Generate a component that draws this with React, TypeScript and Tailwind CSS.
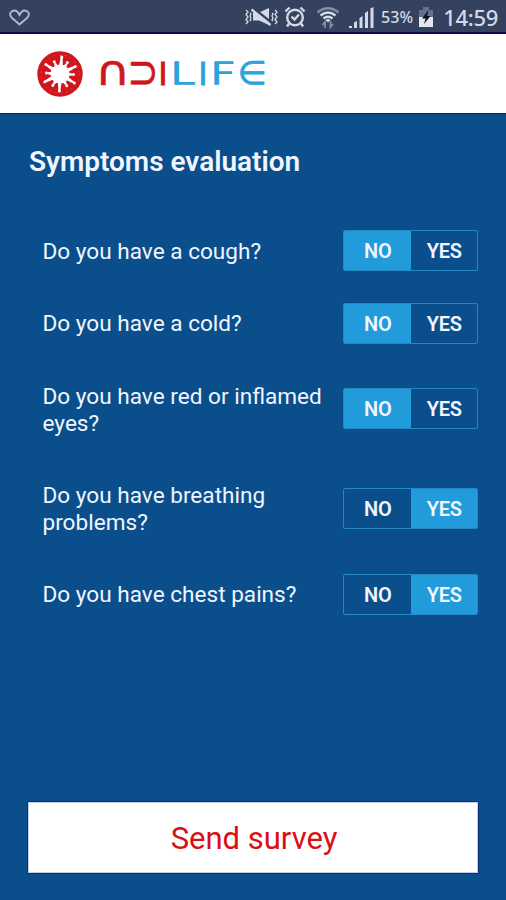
import { useState } from "react";
import { clsx } from "clsx";

const questions = [
  { text: "Do you have a cough?", answer: "NO" },
  { text: "Do you have a cold?", answer: "NO" },
  { text: "Do you have red or inflamed eyes?", answer: "NO" },
  { text: "Do you have breathing problems?", answer: "YES" },
  { text: "Do you have chest pains?", answer: "YES" },
];

function StatusBar() {
  return (
    <div className="flex h-[34px] shrink-0 items-center border-b-2 border-[#0b0c46] bg-[#344260] pt-0.5 pr-2 pl-[9px] text-[#d3dae6]">
      <svg width="22" height="17" viewBox="0 0 22 17" fill="none" stroke="#aebccd" strokeWidth="1.8">
        <path d="M10.500 15.500 2.500 8.500C-.5 5 2 1.500 5.500 1.500 8 1.500 9.500 4 10.500 6 11.500 4 13 1.500 15.500 1.500 19 1.500 21.500 5 18.500 8.500Z" />
      </svg>

      <svg className="ml-[213px]" width="34" height="20" viewBox="0 0 34 20" fill="none" stroke="currentColor">
        <path d="M2 3l2 2-2 2.500 2 2.500-2 2.500 2 2.500-2 2M6 6l1 1-1 2 1 2-1 2 1 1M31 3l2 2-2 2.500 2 2.500-2 2.500 2 2.500-2 2M28 6l1 1-1 2 1 2-1 2 1 1" strokeWidth="1.300" />
        <path d="M9 5.500h6L25 1v17l-10-4.500H9z" fill="currentColor" stroke="none" />
        <path d="M9 1l19 15" stroke="#344260" strokeWidth="2.500" />
        <path d="M7.500 2.500l19 15.500" strokeWidth="2.400" />
      </svg>

      <svg className="ml-[6px]" width="22" height="22" viewBox="0 0 22 22" fill="none" stroke="currentColor" strokeWidth="2.400">
        <circle cx="11" cy="11.500" r="7.800" />
        <path d="M7.500 10.500l3 3 4.500-5M1.500 5.500 5.500 1.500M16.500 1.500l4 4M5 17.500l-2 3M17 17.500l2 3" />
      </svg>

      <svg className="ml-[10px]" width="24" height="23" viewBox="0 0 24 23" fill="none" stroke="currentColor" strokeWidth="2.400">
        <path d="M1.500 6.500Q12-2 22.500 6.500" stroke="#8390a7" />
        <path d="M4.500 9.500q7.500-6 15 0M7.500 12.500q4.500-3.500 9 0" />
        <path d="M9.500 14q2.500-2 5 0L12 16.500z" fill="currentColor" stroke="none" />
        <path d="M9 22v-6l-2.500 3M14.500 15v6l2.500-3" stroke="#8390a7" strokeWidth="1.800" />
      </svg>

      <svg className="ml-[9px]" width="25" height="21" viewBox="0 0 25 21" fill="currentColor">
        <path d="M0 19h3v2H0zM5 15.500l3-1.500v7H5zM10.500 11l3-2v12h-3zM16 6l3-2v17h-3zM21.500 1.500l3-1.500v21h-3z" />
      </svg>

      <span className="ml-[7px] w-[34px] font-['Noto_Sans',sans-serif] text-[16px] font-medium tracking-[0.1px]">
        53%
      </span>
      <svg className="ml-[4px]" width="14" height="20" viewBox="0 0 14 20">
        <path d="M4 0h6v3h4v17H0V3h4z" fill="#65718a" />
        <path d="M0 10h14v10H0z" fill="#e3e7ed" />
        <path d="M9.500 3 3 11.500h3.500L5 17l6.500-8H8z" fill="#0c1019" />
      </svg>
      <span className="ml-auto pt-px font-['Noto_Sans',sans-serif] text-[22px] font-medium tracking-[-0.3px]">
        14:59
      </span>
    </div>
  );
}

function Emblem() {
  const rays = [6, 33, 64, 92, 122, 150, 182, 212, 243, 274, 304, 335];
  return (
    <svg width="46" height="46" viewBox="0 0 46 46">
      <circle cx="23" cy="23" r="22.700" fill="#cf161d" />
      <circle cx="23" cy="23" r="19" fill="none" stroke="#de4b4f" strokeDasharray="1.500 4" />
      <circle cx="23" cy="23" r="9.500" fill="#fff" />
      {rays.map((angle, i) => (
        <g key={angle} transform={`rotate(${angle} 23 23)`} fill="#fff">
          <path d={i % 2 ? "M21 16l1-5h2l1 5z" : "M21 16l1-9.500h2l1 9.500z"} />
          <circle cx="23" cy={i % 2 ? 9.5 : 6} r="1.500" />
        </g>
      ))}
    </svg>
  );
}

const wordmark = [
  { glyph: "∩", box: "w-[24px] text-[#cf161d]", shape: "text-[37px] -translate-y-[3px] scale-x-[1.3] scale-y-[1.12] [-webkit-text-stroke:0.5px]" },
  { glyph: "⊃", box: "w-[24px] text-[#cf161d]", shape: "text-[37px] -translate-y-[1.5px] scale-y-[1.28] [-webkit-text-stroke:0.6px]" },
  { glyph: "I", box: "w-[4px] text-[#cf161d]", shape: "text-[32px] -translate-y-[0.5px] [-webkit-text-stroke:0.8px]" },
  { glyph: "L", box: "w-[24px] text-[#2ba3db]", shape: "text-[31px] -translate-y-[0.5px] font-extralight scale-x-[1.45] [-webkit-text-stroke:1.7px]" },
  { glyph: "I", box: "w-[4px] text-[#2ba3db]", shape: "text-[32px] -translate-y-[0.5px] [-webkit-text-stroke:0.8px]" },
  { glyph: "F", box: "w-[24px] text-[#2ba3db]", shape: "text-[31px] -translate-y-[0.5px] font-extralight scale-x-[1.45] [-webkit-text-stroke:1.7px]" },
  { glyph: "∈", box: "w-[24px] text-[#2ba3db]", shape: "text-[37px] -translate-x-px scale-x-[0.9] scale-y-[0.87] [-webkit-text-stroke:0.9px]" },
];

function Header() {
  return (
    <header className="flex h-[79px] shrink-0 items-center bg-white pl-[37px]">
      <Emblem />
      <div aria-label="NDILIFE" className="ml-[18px] flex gap-[6px] font-['DejaVu_Sans',sans-serif] leading-none">
        {wordmark.map((letter, i) => (
          <span key={i} className={clsx("flex h-6 items-center justify-center", letter.box)}>
            <span className={clsx("shrink-0", letter.shape)}>{letter.glyph}</span>
          </span>
        ))}
      </div>
    </header>
  );
}

function Toggle({ initial }: { initial: string }) {
  const [value, setValue] = useState(initial);

  return (
    <div className="flex h-[41px] w-[135px] shrink-0 overflow-hidden rounded-[2px] border border-[#2389c4] text-[20px] font-semibold">
      {["NO", "YES"].map((option) => (
        <button
          key={option}
          onClick={() => setValue(option)}
          className={clsx("flex-1 pt-px pl-px tracking-[-0.3px]", value === option && "bg-[#229bdb]")}
        >
          {option}
        </button>
      ))}
    </div>
  );
}

export default function App() {
  return (
    <div className="flex h-[900px] w-[506px] flex-col overflow-hidden bg-[#0a4f8c] font-[Roboto,sans-serif] text-[#f0f5ff]">
      <StatusBar />
      <Header />

      <main className="flex flex-1 flex-col border-t border-[#08216c] px-7 pt-[30px] pb-[27px]">
        <h1 className="pl-px text-[28px] leading-9 font-semibold tracking-[-0.02px]">Symptoms evaluation</h1>

        <div className="mt-[34.5px] flex flex-col">
          {questions.map((question) => (
            <div key={question.text} className="flex items-center justify-between pl-[14.5px]">
              <p className="w-[290px] pt-[23.3px] pb-[22.1px] text-[22.6px] leading-[27px]">{question.text}</p>
              <Toggle initial={question.answer} />
            </div>
          ))}
        </div>

        <button className="mt-auto h-[71px] border border-[#c5cfe8] bg-white pt-[3px] pl-0.5 text-[31px] text-[#d80f14] outline outline-[#06307c]">
          Send survey
        </button>
      </main>
    </div>
  );
}
